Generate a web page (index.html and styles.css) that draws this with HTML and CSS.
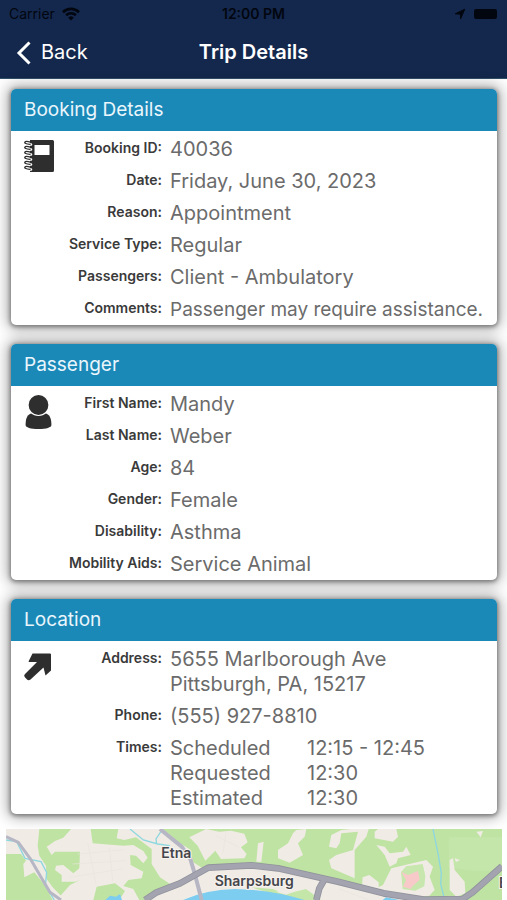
FILE: index.html
```html
<!DOCTYPE html>
<html lang="en">
<head>
<meta charset="utf-8">
<meta name="viewport" content="width=device-width, initial-scale=1">
<title>Trip Details</title>
<link rel="stylesheet" href="styles.css">
</head>
<body>
<header class="top">
  <div class="status">
    <div class="status-left">
      <span>Carrier</span>
      <svg width="18" height="14" viewBox="0 0 18 14" aria-hidden="true">
        <g fill="none" stroke="#02060f" stroke-width="2.6">
          <path d="M1 5.2a11.4 11.4 0 0 1 16 0"/>
          <path d="M4.1 8.3a7 7 0 0 1 9.8 0"/>
        </g>
        <path d="M9 13.6 6.2 10.7a4 4 0 0 1 5.6 0z" fill="#02060f"/>
      </svg>
    </div>
    <span class="clock">12:00 PM</span>
    <div class="status-right">
      <svg width="12" height="12" viewBox="0 0 12 12" aria-hidden="true"><path d="M10.800 1.200 6.600 10.800V6.200L1.200 5.800z" fill="#02060f" stroke="#02060f" stroke-linejoin="round"/></svg>
      <svg width="24" height="10" viewBox="0 0 24 10" aria-hidden="true"><rect width="23" height="10" rx="2" fill="#02060f"/></svg>
    </div>
  </div>
  <nav class="nav">
    <button class="back" type="button">
      <svg width="16" height="24" viewBox="0 0 16 24" aria-hidden="true"><path d="M13.5 1.5 3 12l10.500 10.500" fill="none" stroke="#fff" stroke-width="3"/></svg>
      <span>Back</span>
    </button>
    <h1>Trip Details</h1>
  </nav>
</header>
<main>
  <section class="card">
    <h2>Booking Details</h2>
    <div class="card-body">
      <svg class="icon" width="32" height="34" viewBox="0 0 32 34" aria-hidden="true">
        <path fill-rule="evenodd" d="M7 1h22.500a1.500 1.500 0 0 1 1.500 1.500v29a1.500 1.500 0 0 1-1.500 1.500H7zM11.500 6v10h15V6z" fill="#2e2e2e"/>
        <path d="M5 5.500h3M5 10.500h3M5 15.500h3M5 20.500h3M5 25.500h3M5 30.500h3" fill="none" stroke="#fff" stroke-width="2.600" stroke-linecap="round"/>
        <path d="M7.500 3.200Q2.500 1.700 1.800 3.200T7 5.400M7.500 8.200Q2.500 6.700 1.800 8.200T7 10.400M7.500 13.200Q2.500 11.700 1.800 13.200T7 15.400M7.500 18.200Q2.500 16.700 1.800 18.200T7 20.400M7.500 23.200Q2.500 21.700 1.800 23.200T7 25.400M7.500 28.200Q2.500 26.700 1.800 28.200T7 30.400" fill="none" stroke="#2e2e2e" stroke-width="1.300" stroke-linecap="round"/>
      </svg>
      <dl>
        <dt>Booking ID:</dt><dd>40036</dd>
        <dt>Date:</dt><dd>Friday, June 30, 2023</dd>
        <dt>Reason:</dt><dd>Appointment</dd>
        <dt>Service Type:</dt><dd>Regular</dd>
        <dt>Passengers:</dt><dd>Client - Ambulatory</dd>
        <dt>Comments:</dt><dd class="comment">Passenger may require assistance.</dd>
      </dl>
    </div>
  </section>
  <section class="card">
    <h2>Passenger</h2>
    <div class="card-body">
      <svg class="icon" width="32" height="36" viewBox="0 0 32 36" aria-hidden="true">
        <path d="M8 19.500C3.500 21 2.600 26 2.600 31c0 2.500 5 4 12.900 4s12.900-1.500 12.900-4c0-5-.9-10-5.400-11.500z" fill="#2e2e2e"/>
        <circle cx="15.500" cy="11" r="10.500" fill="#2e2e2e" stroke="#fff" stroke-width="1.200"/>
      </svg>
      <dl>
        <dt>First Name:</dt><dd>Mandy</dd>
        <dt>Last Name:</dt><dd>Weber</dd>
        <dt>Age:</dt><dd>84</dd>
        <dt>Gender:</dt><dd>Female</dd>
        <dt>Disability:</dt><dd>Asthma</dd>
        <dt>Mobility Aids:</dt><dd>Service Animal</dd>
      </dl>
    </div>
  </section>
  <section class="card">
    <h2>Location</h2>
    <div class="card-body">
      <svg class="icon" width="32" height="34" viewBox="0 0 32 34" aria-hidden="true">
        <path d="M9.500 4.500H27Q28 4.500 28 5.500V21.500L22.500 26.500 20.500 18.500 7.500 30.500Q5.500 32 4 30.500L1.700 28Q.5 26.500 2 25L14 13H6Q5 13 6 11.500z" fill="#2e2e2e"/>
      </svg>
      <dl>
        <dt>Address:</dt><dd>5655 Marlborough Ave<br>Pittsburgh, PA, 15217</dd>
        <dt>Phone:</dt><dd>(555) 927-8810</dd>
        <dt>Times:</dt>
        <dd class="times">
          <span>Scheduled</span><span>12:15 - 12:45</span>
          <span>Requested</span><span>12:30</span>
          <span>Estimated</span><span>12:30</span>
        </dd>
      </dl>
    </div>
  </section>
  <div class="map">
    <svg viewBox="0 0 1488 213" preserveAspectRatio="xMidYMin slice" role="img" aria-label="Map of Etna and Sharpsburg">
      <rect width="1488" height="213" fill="#bfe3a3"/>
      <path d="M1330 25h158v100h-90l-70-10z" fill="#c5e6ab"/>
      <g fill="#f0ece5">
        <path d="M0 0H100L95 50 100 80 120 110 122 150 140 175 165 200V213H140L118 170 85 130 55 145 52 105 60 95 45 75H0z"/>
        <path d="M172 26 195 0H254L260 43 352 50 382 48 412 66 425 86 412 103 390 80 372 78 374 108 412 128 407 148 367 153 352 171 382 180 400 213H340L357 186 327 163 272 173 262 213H152L192 168 222 153 207 158 167 158 167 138 147 123 150 110 172 108 202 133 220 118 222 68H147L137 78 122 53 147 36z"/>
        <path d="M337 0H470L510 35 550 60 562 100 590 118 500 170 462 145 437 105V60L390 25 355 33 332 28z"/>
        <path d="M550 25 590 5 600 0 640 8 675 5 715 14 725 40 705 55 722 75 715 88 645 90 628 65 598 95 575 50z"/>
        <path d="M417 213 452 193 522 163 617 113 736 108 816 118 996 158 1133 193 1253 213z"/>
        <path d="M756 43 773 38 766 98 751 98zM871 3 901 0 896 23 876 43 891 78 851 101 816 88V63L846 43 861 13z"/>
        <path d="M976 18 1006 3 1036 0H1088L1081 23 1046 63V148L976 118 969 93 991 78 1041 63 1056 8 1006 13 1001 43 991 58 969 53zM1106 8 1116 0H1171L1176 23 1161 38 1106 28z"/>
        <path d="M1111 48 1136 53 1151 73 1191 68 1201 53 1214 78 1176 88 1171 103 1151 113 1136 78z"/>
        <path d="M1156 118 1261 93 1281 113 1271 143 1286 183 1270 200 1210 205 1110 178 1131 168zM1331 93 1341 88 1346 123 1376 158 1378 193 1351 203 1331 183zM1346 88 1362 93 1350 99zM1411 8 1431 6 1424 25zM1070 145 1090 138 1118 160 1118 180 1068 170z"/>
      </g>
      <path d="M1200 112 1250 105 1258 140 1255 172 1228 185 1190 180 1185 130z" fill="#c7e7ae"/>
      <path d="M1186 128 1206 138 1236 126 1241 153 1221 170 1214 180 1191 173 1200 154z" fill="#f7c9c8"/>
      <path d="M736 175 800 180 840 195 900 180 945 213H860z" fill="#c4e6a9"/>
      <path d="M810 188 845 180 860 190 840 197z" fill="#f0ece5"/>
      <path d="M531 213Q600 182 686 180 790 182 896 213zM298 213 312 200 330 203 342 195 348 213zM1130 213 1140 205 1180 213z" fill="#7ccdf0"/>
      <g fill="none" stroke="#e9e4de" stroke-width="2"><path d="M215 75 355 62M200 105 360 95M190 145 350 120M245 40 270 165M310 55 320 155M630 20 700 55M660 12 650 75M1000 180 1090 213M1040 172 1150 205"/></g>
      <g fill="none" stroke="#8ed7df" stroke-width="4"><path d="M0 33 32 38 57 88 105 98 122 130 118 170 145 213M372 0 412 33 455 45 492 50M470 0 450 30 452 45M1281 0 1296 73 1306 133 1304 165 1316 213"/></g>
      <g fill="none" stroke="#b7b6c5" stroke-width="9" stroke-linejoin="round"><path d="M0 23 37 40 72 88 107 148 132 190 165 213"/><path stroke-width="12" d="M462 0 492 25 527 53 553 90 565 130 587 213"/></g>
      <path fill="none" stroke="#92939d" stroke-width="20" stroke-linejoin="round" d="M417 213 452 190 522 163 607 116 736 109 816 118 996 158 1133 193 1253 212 1370 210 1400 190 1488 112M956 150 940 178 931 213"/>
      <path fill="none" stroke="#a3a4b0" stroke-width="15" stroke-linejoin="round" d="M417 213 452 190 522 163 607 116 736 109 816 118 996 158 1133 193 1253 212 1370 210 1400 190 1488 112M956 150 940 178 931 213"/>
      <g class="places">
        <text x="466" y="88">Etna</text>
        <text x="626" y="172">Sharpsburg</text>
        <text x="1479" y="176">E</text>
      </g>
    </svg>
  </div>
</main>
</body>
</html>
```
FILE: styles.css
```css
* { box-sizing: border-box; }

body {
  margin: 0;
  height: 100vh;
  overflow: hidden;
  display: flex;
  flex-direction: column;
  background: #fff;
  color: #6b6b6b;
  font-family: Inter, "Liberation Sans", sans-serif;
  font-size: 20px;
  line-height: 25px;
}

.top {
  flex: none;
  background: #14284d;
  border-bottom: 1px solid #2f5069;
}

.status {
  display: grid;
  grid-template-columns: 1fr auto 1fr;
  align-items: center;
  height: 27px;
  padding: 0 9px;
  color: #02060f;
  font-size: 14px;
  line-height: 27px;
}

.status-left,
.status-right {
  display: flex;
  align-items: center;
  gap: 7px;
}

.status-right {
  justify-content: flex-end;
  gap: 8px;
}

.clock { font-weight: 600; }

.nav {
  display: grid;
  grid-template-columns: 1fr auto 1fr;
  align-items: center;
  height: 51px;
  padding: 0 16px;
  color: #fff;
}

.back {
  display: flex;
  align-items: center;
  justify-self: start;
  gap: 9px;
  padding: 0;
  border: 0;
  background: none;
  color: inherit;
  font: inherit;
}

h1 {
  margin: 0;
  font-size: 20px;
  font-weight: 600;
}

main {
  flex: 1;
  min-height: 0;
  display: flex;
  flex-direction: column;
  padding: 10px 10px 0 11px;
}

.card {
  flex: none;
  margin-bottom: 19px;
  border-radius: 5px;
  background: #fff;
  box-shadow: 0 1px 4px 1px rgba(0, 0, 0, 0.4), 0 0 14px 4px rgba(0, 0, 0, 0.32);
}

.card:nth-of-type(3) { margin-bottom: 15px; }

h2 {
  margin: 0;
  padding: 0 13px;
  border-radius: 5px 5px 0 0;
  background: #1b89b8;
  color: #eaf6fc;
  font-size: 19px;
  font-weight: 400;
  line-height: 42px;
}

.card-body {
  display: flex;
  padding: 6px 0 0 12px;
}

.icon {
  flex: none;
  margin-top: 2px;
}

dl {
  flex: 1;
  display: grid;
  grid-template-columns: 107px 1fr;
  column-gap: 8px;
  row-gap: 7px;
  margin: 0 0 3px;
}

dt {
  color: #3a3a3a;
  font-size: 14px;
  font-weight: 600;
  line-height: 21px;
  text-align: right;
  white-space: nowrap;
}

dd {
  margin: 0;
  white-space: nowrap;
}

.comment { font-size: 19px; }

.times {
  display: grid;
  grid-template-columns: 137px 1fr;
}

.map {
  flex: 1;
  min-height: 0;
  margin: 0 -5px;
  overflow: hidden;
}

.map svg {
  display: block;
  width: 100%;
  height: 100%;
}

.places {
  fill: #45454b;
  stroke: #f6f3ee;
  stroke-width: 6px;
  paint-order: stroke;
  font-size: 42px;
  font-weight: 600;
}
```
